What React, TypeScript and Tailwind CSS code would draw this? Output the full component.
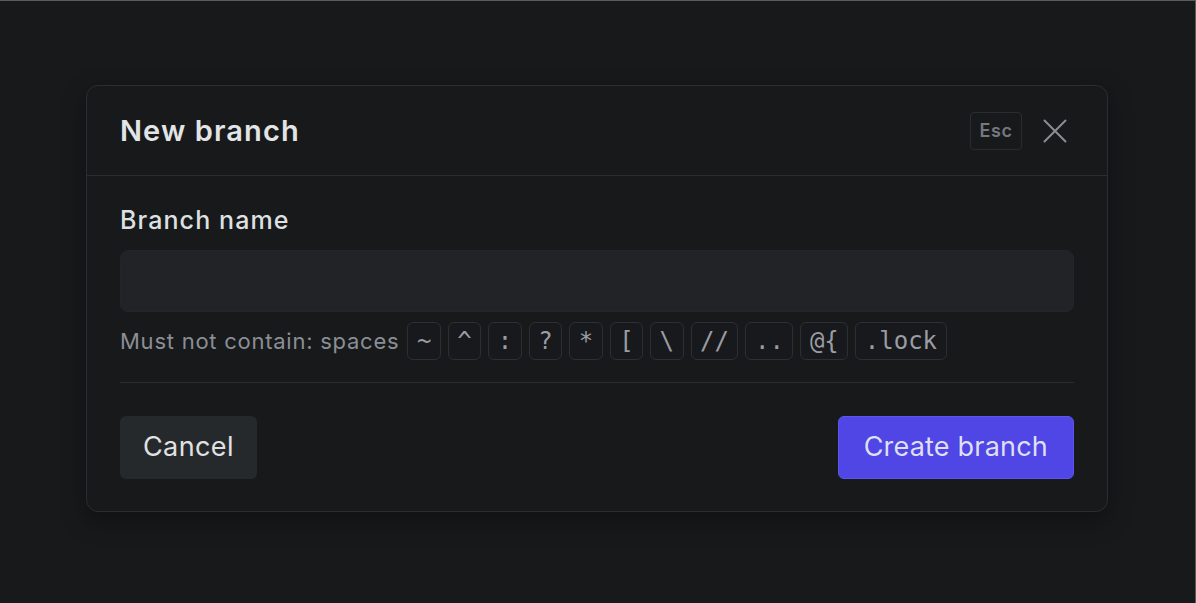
import React from "react";

const chips = ["~", "^", ":", "?", "*", "[", "\\", "//", "..", "@{", ".lock"];

export default function App() {
  return (
    <div
      className="w-[1196px] h-[603px] bg-[#18191b] border-t border-r border-[#5a5b5d] pt-[84px] pl-[86px] overflow-hidden"
      style={{ fontFamily: "Inter, 'Noto Sans', sans-serif" }}
    >
      <div className="w-[1022px] rounded-[12px] border border-[#2b2e31] bg-[#17191b] shadow-[0_8px_24px_rgba(0,0,0,0.35)]">
        <div className="h-[90px] border-b border-[#2b2e31] px-[33px] flex items-center justify-between">
          <div className="text-[29px] font-semibold text-[#e3e4e6] tracking-[1.1px]">New branch</div>
          <div className="flex items-center">
            <div className="w-[52px] h-[38px] border border-[#2a2d30] rounded-[4px] flex items-center justify-center text-[18px] font-semibold text-[#75787e] tracking-[0.5px]">
              Esc
            </div>
            <svg
              className="ml-[21px] mr-[7px]"
              width="24"
              height="24"
              viewBox="0 0 24 24"
              fill="none"
              stroke="#8a8d92"
              strokeWidth="2"
              strokeLinecap="round"
            >
              <path d="M1.5 1.5L22.5 22.5M22.5 1.5L1.5 22.5" />
            </svg>
          </div>
        </div>
        <div className="px-[33px] pt-[28px] pb-[32px]">
          <div className="text-[25px] leading-[32px] font-medium text-[#dfe0e2] tracking-[1.1px]">Branch name</div>
          <div className="mt-[14px] h-[62px] rounded-[8px] bg-[#212326] border border-[#232529]" />
          <div className="mt-[10px] h-[38px] flex items-center">
            <span className="text-[22px] text-[#8b8e95] mr-[8px] tracking-[0.75px]">Must not contain: spaces</span>
            <div className="flex items-center gap-[7px]">
              {chips.map((c) => (
                <span
                  key={c}
                  className="h-[38px] px-[8.5px] flex items-center border border-[#2c2f33] rounded-[6px] text-[24px] text-[#9a9da3] bg-[#18191c]"
                  style={{ fontFamily: "'DejaVu Sans Mono', monospace" }}
                >
                  {c}
                </span>
              ))}
            </div>
          </div>
          <div className="mt-[22px] h-px bg-[#2b2e31]" />
          <div className="mt-[33px] flex items-center justify-between">
            <button className="h-[63px] px-[23px] rounded-[6px] bg-[#26292c] text-[27px] text-[#e0e1e3] tracking-[0.4px]">
              Cancel
            </button>
            <button className="h-[63px] px-[25px] rounded-[6px] bg-[#4f46e5] border border-[#5d55ef] text-[27px] text-[#dedff0] tracking-[0.2px]">
              Create branch
            </button>
          </div>
        </div>
      </div>
    </div>
  );
}
